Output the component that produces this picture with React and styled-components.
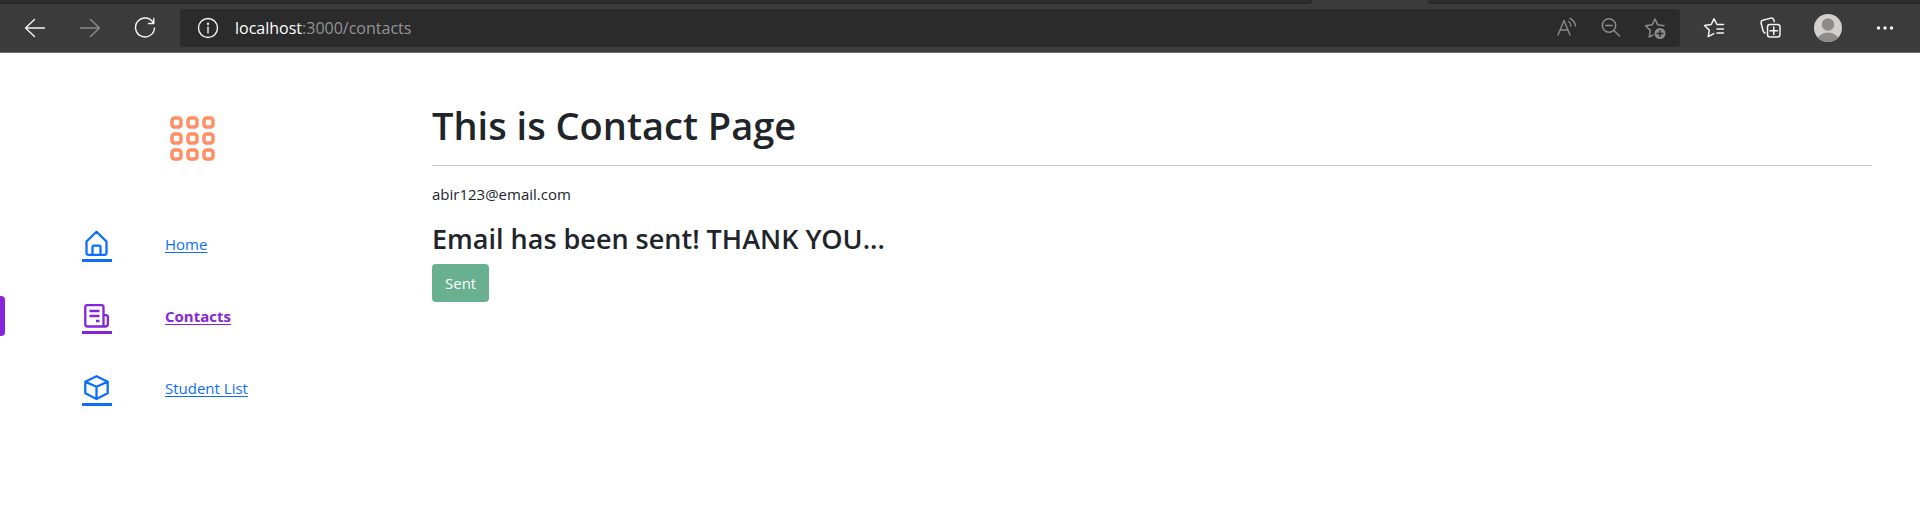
import React from "react";
import styled, { createGlobalStyle } from "styled-components";

const GlobalStyle = createGlobalStyle`
  *, *::before, *::after { box-sizing: border-box; }
  body {
    margin: 0;
    background: #fff;
    color: #212529;
    font: 400 15px/24px "Segoe UI", "Open Sans", "Noto Sans", sans-serif;
  }
`;

const TabStrip = styled.div`
  display: flex;
  height: 4px;
  background: #3b3b3b;
`;

const TabGap = styled.div`
  flex: ${(p) => p.$grow} 1 0;
  background: #2d2d2d;
  border-bottom: 1px solid #242424;
  border-radius: ${(p) => (p.$side === "left" ? "0 0 6px 0" : "0 0 0 6px")};
`;

const ActiveTab = styled.div`
  flex: 0 0 116px;
`;

const Toolbar = styled.header`
  display: flex;
  align-items: center;
  height: 49px;
  padding: 0 7px 0 8px;
  background: #3b3b3b;
  border-bottom: 1px solid #6b6969;
`;

const ToolGroup = styled.div`
  display: flex;
  align-items: center;
  gap: ${(p) => p.$gap || 0}px;
`;

const ToolButton = styled.button`
  display: flex;
  align-items: center;
  justify-content: center;
  flex: none;
  width: ${(p) => p.$width}px;
  height: 38px;
  padding: 0;
  border: 0;
  background: none;
  color: ${(p) => (p.$dim ? "#8b8b8b" : "#f4f4f4")};
`;

const AddressBar = styled.form`
  display: flex;
  align-items: center;
  flex: 1;
  min-width: 0;
  height: 38px;
  margin: 0 5px 0 8px;
  padding: 0 3px 0 8px;
  border-radius: 4px;
  background: #2b2b2b;
  font-size: 16px;
`;

const Host = styled.label`
  margin-left: 8px;
  color: #fff;
`;

const AddressInput = styled.input`
  flex: 1;
  min-width: 0;
  padding: 0;
  border: 0;
  outline: 0;
  background: none;
  color: #949494;
  font: inherit;
`;

const Layout = styled.div`
  display: flex;
  align-items: flex-start;
`;

const Sidebar = styled.aside`
  flex: 0 0 20%;
  padding-top: 63px;
`;

const Logo = styled.a`
  display: flex;
  justify-content: center;
  margin-bottom: 62px;
  color: #ff9066;
`;

const NavList = styled.ul`
  display: flex;
  flex-direction: column;
  gap: 32px;
  margin: 0;
  padding: 0;
  list-style: none;
`;

const NavItem = styled.li`
  display: flex;
  height: 40px;
`;

const Marker = styled.span`
  width: 5px;
  border-radius: 0 4px 4px 0;
  background: ${(p) => (p.$active ? "#8624db" : "transparent")};
`;

const NavLink = styled.a`
  display: flex;
  align-items: center;
  gap: 53px;
  padding-left: 77px;
  color: ${(p) => (p.$active ? "#8624db" : "#0d6efd")};
  font-weight: ${(p) => (p.$active ? 700 : 400)};
  text-decoration-thickness: 1px;
  text-underline-offset: 2px;
`;

const NavIcon = styled.span`
  display: flex;
  width: 30px;
  padding-top: 2px;
  border-bottom: 3px solid currentColor;
`;

const Main = styled.main`
  flex: 1;
  min-width: 0;
  padding: 48px;
`;

const Title = styled.h1`
  margin: 0 0 16px;
  font-size: 38px;
  font-weight: 600;
  line-height: 48px;
`;

const Divider = styled.hr`
  height: 1px;
  margin: 0 0 16px;
  border: 0;
  background: #c8c9ca;
`;

const Email = styled.p`
  margin: 0 0 16px;
`;

const Notice = styled.h3`
  margin: 0 0 8px;
  font-size: 27px;
  font-weight: 600;
  line-height: 34px;
`;

const SentButton = styled.button`
  display: block;
  height: 38px;
  padding: 0 13px;
  border: 0;
  border-radius: 4px;
  background: #69b090;
  color: #fff;
  font: inherit;
`;

function Stroke({ size = 22, width = 1.4, children }) {
  return (
    <svg width={size} height={size} viewBox={`0 0 ${size} ${size}`} fill="none" stroke="currentColor"
      strokeWidth={width} strokeLinecap="round" strokeLinejoin="round" aria-hidden="true">
      {children}
    </svg>
  );
}

const BackIcon = () => <Stroke><path d="M20.5 11H1.5M10.5 2.5 1.5 11l9 8.5" /></Stroke>;
const ForwardIcon = () => <Stroke><path d="M1.500 11h19M11.500 2.500l9 8.500-9 8.500" /></Stroke>;
const ReloadIcon = () => <Stroke><path d="M19.400 6A9.500 9.500 0 1 0 20.500 11M19.800 1.500V6.500H14.500" /></Stroke>;
const InfoIcon = () => (
  <Stroke><circle cx="11" cy="11" r="9.500" /><path d="M11 10v6" /><circle cx="11" cy="6.700" r=".5" fill="currentColor" /></Stroke>
);
const ReadAloudIcon = () => (
  <Stroke width={1.4}><path d="M2 18 8 3.500l6 14.500M4.300 13h7.400M12.500 4.500q2.500 1.500 2.500 4.500M14 1.500q5 2.500 5.500 7.500" /></Stroke>
);
const ZoomOutIcon = () => (
  <Stroke width={1.5}><circle cx="9" cy="8.500" r="6.700" /><path d="M5.800 8.500h6.400M14 13.500l5.500 5.500" /></Stroke>
);
const AddFavoriteIcon = () => (
  <Stroke width={1.500}>
    <path d="M20 8.700l-6.200-.9L11 2 8.200 7.800 1.500 8.800l4.800 4.600L5.200 20l3.800-2" />
    <circle cx="16" cy="16.500" r="5.500" fill="currentColor" stroke="none" />
    <path d="M16 13.700v5.600M13.200 16.500h5.600" stroke="#2b2b2b" />
  </Stroke>
);
const FavoritesIcon = () => (
  <Stroke width={1.500}>
    <path d="M20.500 7.500H14L11 1.800 8.200 7.500 1.500 8.500l4.800 4.600L5.200 19.600l5.600-3M14 12h6.500M14 16h6.500" />
  </Stroke>
);
const CollectionsIcon = () => (
  <Stroke width={1.500}>
    <rect x="7.500" y="7.500" width="12.500" height="12.500" rx="2.500" />
    <path d="M13.750 10v7.500M10 13.750H17.500M5 16Q3.500 15.500 3 13.500L1.100 6Q.8 4 2.700 3.300L11 1.100Q13 .8 13.700 2.500L14.200 4.500" />
  </Stroke>
);
const AvatarIcon = () => (
  <svg width="28" height="28" viewBox="0 0 28 28" aria-hidden="true">
    <clipPath id="avatar"><circle cx="14" cy="14" r="14" /></clipPath>
    <g clipPath="url(#avatar)">
      <rect width="28" height="28" fill="#d2d0ce" />
      <circle cx="14" cy="10.500" r="6.200" fill="#8f8b88" />
      <ellipse cx="14" cy="26" rx="10.500" ry="7.500" fill="#8f8b88" />
    </g>
  </svg>
);
const MoreIcon = () => (
  <svg width="22" height="22" fill="currentColor" aria-hidden="true">
    <circle cx="4.500" cy="11" r="1.700" /><circle cx="11" cy="11" r="1.700" /><circle cx="17.500" cy="11" r="1.700" />
  </svg>
);

const GridIcon = () => (
  <svg width="46" height="46" viewBox="0 0 46 46" fill="none" stroke="currentColor" strokeWidth="3.500" aria-hidden="true">
    {[2, 18, 34].map((y) => [2, 18, 34].map((x) => (
      <rect key={`${x}-${y}`} x={x + 1} y={y} width="9" height="9" rx="2.500" />
    )))}
  </svg>
);
const HomeIcon = () => (
  <Stroke size={30} width={2.300}>
    <path d="M4.500 12.500 14.500 2.700l10 9.800V24q0 1.800-1.800 1.800H6.300Q4.500 25.800 4.500 24ZM10.500 25.500v-7.500q0-1.300 1.300-1.300h5.400q1.300 0 1.300 1.300v7.500" />
  </Stroke>
);
const NewsIcon = () => (
  <Stroke size={30} width={2.300}>
    <path d="M21.500 25.500H5.500Q3.300 25.500 3.300 23.300V6Q3.300 4.200 5.100 4.200H19.700Q21.500 4.200 21.500 6ZM21.500 14.200h2.400Q25.900 14.200 25.900 16v7Q25.900 25.500 23.100 25.500H21.500" />
    <path d="M7.500 10h10M7.500 15h10M14 20H17.500" strokeLinecap="butt" />
  </Stroke>
);
const CubeIcon = () => (
  <Stroke size={30} width={2.300}>
    <path d="M14.500 3.200 25.700 8.700V20.300L14.500 26 3.300 20.300V8.700ZM3.300 8.700 14.500 13.800 25.700 8.700M14.500 13.800V26" />
  </Stroke>
);

const links = [
  { label: "Home", href: "/", Icon: HomeIcon },
  { label: "Contacts", href: "/contacts", Icon: NewsIcon, active: true },
  { label: "Student List", href: "/students", Icon: CubeIcon },
];

export default function App() {
  return (
    <>
      <GlobalStyle />
      <TabStrip>
        <TabGap $grow={1312} $side="left" />
        <ActiveTab />
        <TabGap $grow={492} $side="right" />
      </TabStrip>
      <Toolbar>
        <ToolGroup $gap={1}>
          <ToolButton $width={54} aria-label="Back"><BackIcon /></ToolButton>
          <ToolButton $width={54} $dim aria-label="Forward"><ForwardIcon /></ToolButton>
          <ToolButton $width={54} aria-label="Refresh"><ReloadIcon /></ToolButton>
        </ToolGroup>
        <AddressBar>
          <ToolButton type="button" $width={39} aria-label="Site information"><InfoIcon /></ToolButton>
          <Host htmlFor="address">localhost</Host>
          <AddressInput id="address" type="text" defaultValue=":3000/contacts" />
          <ToolButton type="button" $width={44} $dim aria-label="Read aloud"><ReadAloudIcon /></ToolButton>
          <ToolButton type="button" $width={44} $dim aria-label="Zoom out"><ZoomOutIcon /></ToolButton>
          <ToolButton type="button" $width={44} $dim aria-label="Add to favorites"><AddFavoriteIcon /></ToolButton>
        </AddressBar>
        <ToolGroup>
          <ToolButton $width={57} aria-label="Favorites"><FavoritesIcon /></ToolButton>
          <ToolButton $width={57} aria-label="Collections"><CollectionsIcon /></ToolButton>
          <ToolButton $width={57} aria-label="Profile"><AvatarIcon /></ToolButton>
          <ToolButton $width={57} aria-label="Settings and more"><MoreIcon /></ToolButton>
        </ToolGroup>
      </Toolbar>
      <Layout>
        <Sidebar>
          <Logo href="/" aria-label="Dashboard"><GridIcon /></Logo>
          <nav>
            <NavList>
              {links.map(({ label, href, Icon, active }) => (
                <NavItem key={label}>
                  <Marker $active={active} />
                  <NavLink href={href} $active={active} aria-current={active ? "page" : undefined}>
                    <NavIcon><Icon /></NavIcon>
                    {label}
                  </NavLink>
                </NavItem>
              ))}
            </NavList>
          </nav>
        </Sidebar>
        <Main>
          <Title>This is Contact Page</Title>
          <Divider />
          <Email>abir123@email.com</Email>
          <Notice>Email has been sent! THANK YOU...</Notice>
          <SentButton type="button">Sent</SentButton>
        </Main>
      </Layout>
    </>
  );
}
